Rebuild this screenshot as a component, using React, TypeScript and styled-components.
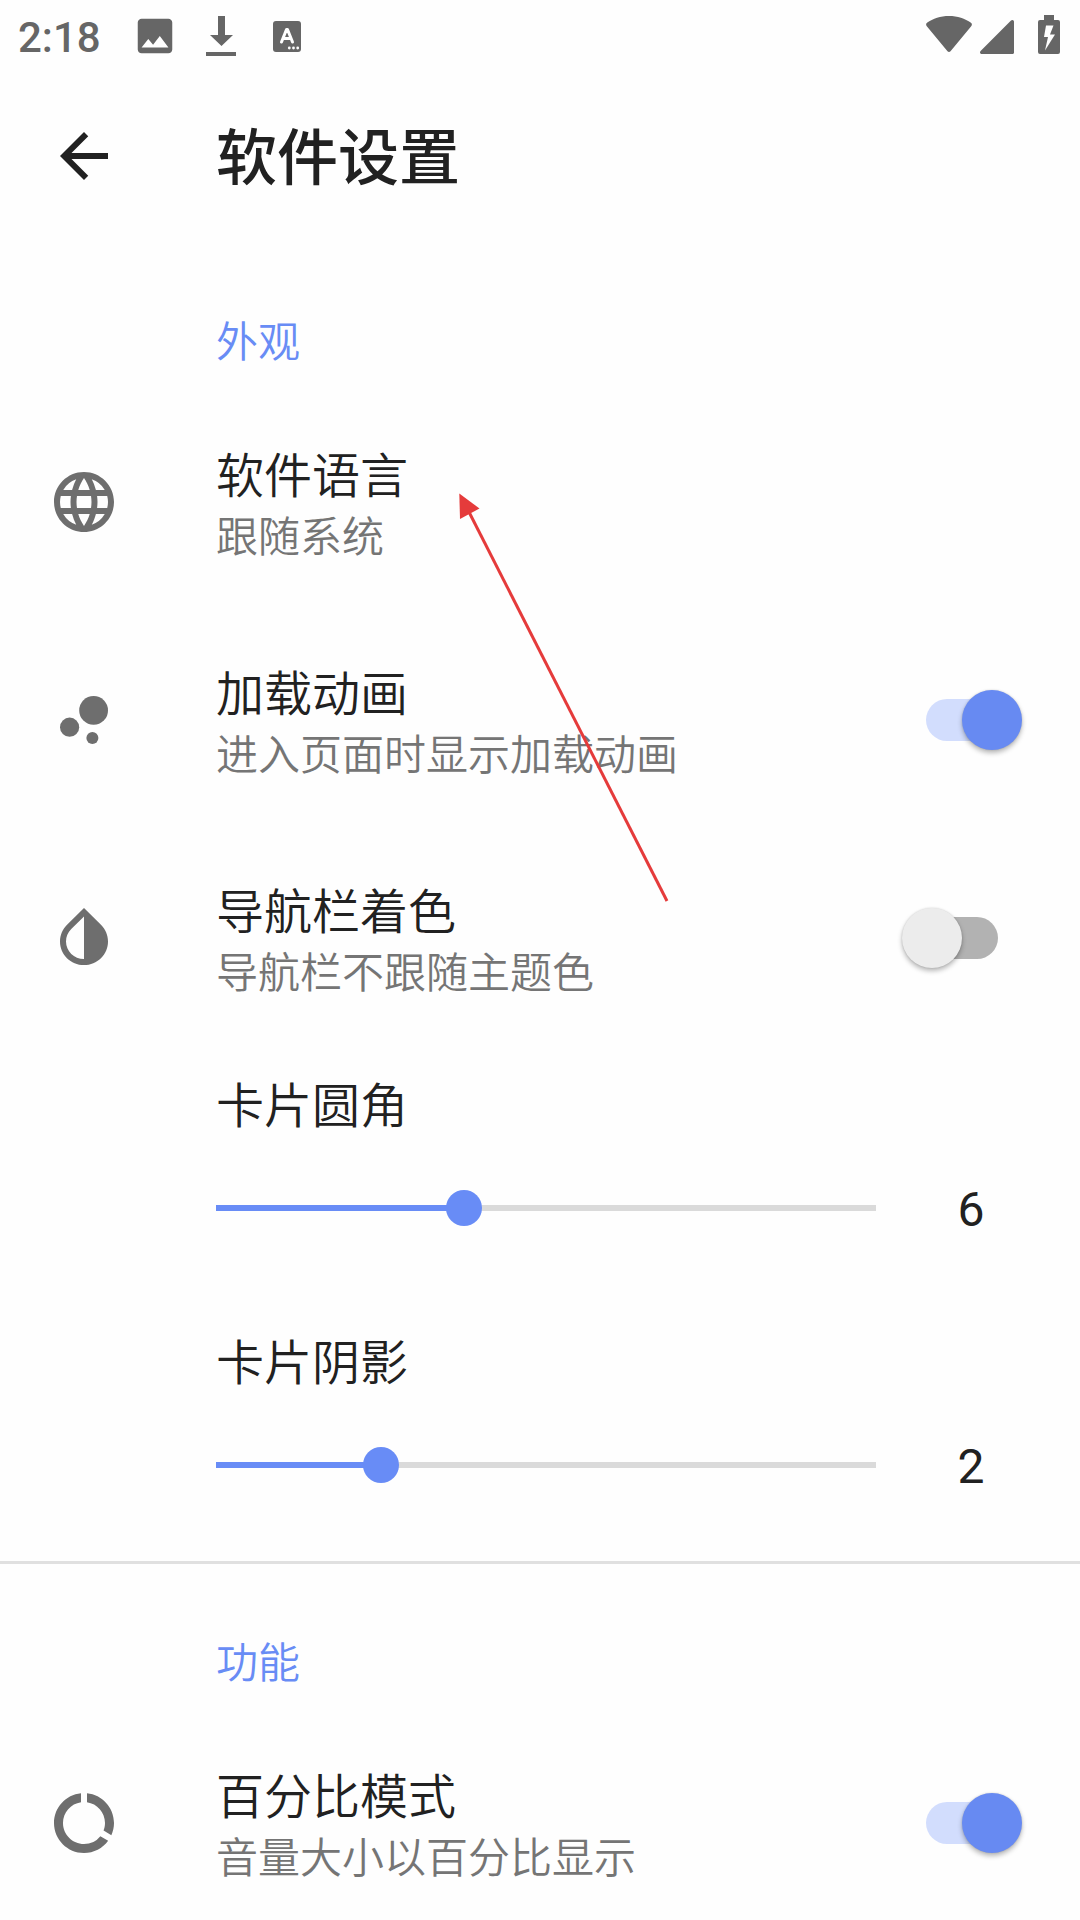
import React, { useId, useState } from 'react';
import styled, { createGlobalStyle } from 'styled-components';
import {
  MdArrowBack,
  MdBubbleChart,
  MdDataUsage,
  MdImage,
  MdInvertColors,
  MdLanguage,
} from 'react-icons/md';

const GlobalStyle = createGlobalStyle`
  *, *::before, *::after { box-sizing: border-box; }
  body {
    margin: 0;
    background: #fefefe;
    color: #212121;
    font-family: Roboto, "Noto Sans CJK SC", sans-serif;
    font-weight: 350;
  }
`;

const Screen = styled.div`
  display: flex;
  flex-direction: column;
  height: 100vh;
  overflow: hidden;
`;

const StatusBar = styled.div`
  flex: none;
  display: flex;
  justify-content: space-between;
  height: 72px;
  padding: 0 20px 0 18px;
  color: #666;

  svg { display: block; }
`;

const Notifications = styled.div`
  display: flex;
  align-items: center;
  gap: 28px;
`;

const SystemIcons = styled.div`
  display: flex;
  align-items: flex-end;
  gap: 8px;
  padding-bottom: 18px;
`;

const BatterySlot = styled.span`
  padding-left: 16px;
`;

const Clock = styled.time`
  margin-right: 3px;
  padding-top: 3px;
  font-size: 42px;
  font-weight: 500;
  line-height: 48px;
`;

const Toolbar = styled.header`
  flex: none;
  display: flex;
  align-items: center;
  height: 168px;
`;

const BackButton = styled.button`
  display: flex;
  align-items: center;
  justify-content: center;
  width: 168px;
  height: 168px;
  margin-right: 48px;
  padding: 0;
  border: 0;
  background: none;
  color: inherit;
`;

const PageTitle = styled.h1`
  margin: 0;
  padding-top: 6px;
  font-size: 61px;
  font-weight: 500;
  line-height: 72px;
`;

const Content = styled.main`
  position: relative;
  flex: 1;
  min-height: 0;
  overflow-y: auto;
  scrollbar-width: none;
`;

const Section = styled.section`
  padding-top: 48px;

  & + & {
    padding-top: 45px;
    border-top: 3px solid #e0e0e0;
  }
`;

const SectionTitle = styled.h2`
  margin: 0;
  padding: 5px 0 0 216px;
  color: #688cf5;
  font-size: 42px;
  font-weight: inherit;
  line-height: 100px;
`;

const Row = styled.div`
  display: flex;
  align-items: center;
  height: 218px;
  padding-right: 58px;
`;

const RowIcon = styled.span`
  flex: none;
  display: flex;
  justify-content: center;
  width: 168px;
  margin-right: 48px;
  color: #6e6e6e;
`;

const RowText = styled.label`
  flex: 1;
  display: flex;
  flex-direction: column;
  padding-top: 8px;
`;

const ItemTitle = styled.span`
  font-size: 48px;
  line-height: 64px;
`;

const ItemSummary = styled.span`
  color: #757575;
  font-size: 42px;
  line-height: 58px;
`;

const Switch = styled.input`
  appearance: none;
  flex: none;
  display: grid;
  align-items: center;
  width: 120px;
  height: 60px;
  margin: 0;

  &::before,
  &::after {
    content: "";
    grid-area: 1 / 1;
  }

  &::before {
    justify-self: center;
    width: 72px;
    height: 42px;
    border-radius: 21px;
    background: #b2b2b2;
  }

  &::after {
    justify-self: start;
    width: 60px;
    height: 60px;
    border-radius: 50%;
    background: #ececec;
    box-shadow: 0 3px 5px rgba(0, 0, 0, 0.28), 0 0 2px rgba(0, 0, 0, 0.14);
  }

  &:checked::before { background: #d2ddfd; }

  &:checked::after {
    justify-self: end;
    background: #678af2;
  }
`;

const SliderBlock = styled.div`
  display: flex;
  flex-direction: column;
  height: 257px;
  padding: 28px 32px 0 216px;
`;

const SliderLabel = styled.label`
  font-size: 48px;
  line-height: 64px;
`;

const SliderLine = styled.div`
  display: flex;
  align-items: center;
  height: 138px;
`;

const Range = styled.input`
  appearance: none;
  flex: 1;
  min-width: 0;
  height: 36px;
  margin: 0 0 0 -18px;
  background: none;

  &::-webkit-slider-runnable-track {
    height: 36px;
    background:
      linear-gradient(#688cf6, #688cf6) 18px 15px / calc((100% - 36px) * var(--fill)) 6px no-repeat,
      linear-gradient(#dadada, #dadada) 18px 15px / calc(100% - 36px) 6px no-repeat;
  }

  &::-webkit-slider-thumb {
    appearance: none;
    width: 36px;
    height: 36px;
    border-radius: 50%;
    background: #688cf6;
  }
`;

const SliderValue = styled.output`
  flex: none;
  width: 154px;
  padding-top: 3px;
  font-size: 48px;
  font-weight: 400;
  line-height: 56px;
  text-align: center;
`;

const Pointer = styled.svg`
  position: absolute;
  top: 250px;
  left: 450px;
  pointer-events: none;
`;

function DownloadIcon() {
  return (
    <svg width="30" height="40" viewBox="0 0 30 40" fill="currentColor" aria-hidden="true">
      <path d="M12 0h7v19h8L15.500 30 4 19h8zM0 36h30v4H0z" />
    </svg>
  );
}

function InputMethodIcon() {
  return (
    <svg width="46" height="31" viewBox="-9 0 46 31" aria-hidden="true">
      <rect width="28" height="31" rx="3" fill="currentColor" />
      <path
        d="M8.500 21 13.500 8.500h1L19.500 21M10.500 17.500h7"
        fill="none"
        stroke="#fefefe"
        strokeWidth="3"
        strokeLinecap="round"
        strokeLinejoin="round"
      />
      <g fill="#fefefe">
        <circle cx="16.300" cy="27" r="1.400" />
        <circle cx="20.500" cy="27" r="1.400" />
        <circle cx="24.700" cy="27" r="1.400" />
      </g>
    </svg>
  );
}

function WifiIcon() {
  return (
    <svg width="46" height="38" viewBox="0 0 46 38" fill="currentColor" aria-hidden="true">
      <path d="M1 10.500C-.2 9.300-.2 7.700 1 6.800 7 2.500 14.500 0 23 0s16 2.500 22 6.800c1.200.9 1.200 2.500 0 3.700L24.500 35.300c-.9 1-2.100 1-3 0z" />
    </svg>
  );
}

function SignalIcon() {
  return (
    <svg width="34" height="34" viewBox="0 0 34 34" fill="currentColor" aria-hidden="true">
      <path d="M31 .6c1.200-1.200 3-.5 3 1.200V32.500c0 .9-.6 1.500-1.500 1.500H1.800C.1 34-.6 32.300.6 31z" />
    </svg>
  );
}

function BatteryIcon() {
  return (
    <svg width="22" height="39" viewBox="0 0 22 39" fill="currentColor" fillRule="evenodd" aria-hidden="true">
      <path d="M6 0h10v5h4a2 2 0 0 1 2 2v30a2 2 0 0 1-2 2H2a2 2 0 0 1-2-2V7a2 2 0 0 1 2-2h4zM8 10.500 6 22h4L7 35.500 17 19.500h-5L15.500 10.500z" />
    </svg>
  );
}

interface SwitchRowProps {
  icon: React.ReactNode;
  title: string;
  summary: string;
  initial: boolean;
}

function SwitchRow({ icon, title, summary, initial }: SwitchRowProps) {
  const id = useId();
  const [on, setOn] = useState(initial);
  return (
    <Row>
      <RowIcon>{icon}</RowIcon>
      <RowText htmlFor={id}>
        <ItemTitle>{title}</ItemTitle>
        <ItemSummary>{summary}</ItemSummary>
      </RowText>
      <Switch id={id} type="checkbox" role="switch" checked={on} onChange={(e) => setOn(e.target.checked)} />
    </Row>
  );
}

interface SliderRowProps {
  title: string;
  max: number;
  initial: number;
}

function SliderRow({ title, max, initial }: SliderRowProps) {
  const id = useId();
  const [value, setValue] = useState(initial);
  const fill = { '--fill': value / max } as React.CSSProperties;
  return (
    <SliderBlock>
      <SliderLabel htmlFor={id}>{title}</SliderLabel>
      <SliderLine>
        <Range
          id={id}
          type="range"
          min={0}
          max={max}
          value={value}
          style={fill}
          onChange={(e) => setValue(Number(e.target.value))}
        />
        <SliderValue htmlFor={id}>{value}</SliderValue>
      </SliderLine>
    </SliderBlock>
  );
}

export default function App() {
  return (
    <Screen lang="zh-CN">
      <GlobalStyle />
      <StatusBar>
        <Notifications>
          <Clock>2:18</Clock>
          <MdImage size={46} />
          <DownloadIcon />
          <InputMethodIcon />
        </Notifications>
        <SystemIcons>
          <WifiIcon />
          <SignalIcon />
          <BatterySlot>
            <BatteryIcon />
          </BatterySlot>
        </SystemIcons>
      </StatusBar>
      <Toolbar>
        <BackButton type="button" aria-label="返回">
          <MdArrowBack size={72} />
        </BackButton>
        <PageTitle>软件设置</PageTitle>
      </Toolbar>
      <Content>
        <Section>
          <SectionTitle>外观</SectionTitle>
          <Row>
            <RowIcon>
              <MdLanguage size={72} />
            </RowIcon>
            <RowText as="div">
              <ItemTitle>软件语言</ItemTitle>
              <ItemSummary>跟随系统</ItemSummary>
            </RowText>
          </Row>
          <SwitchRow icon={<MdBubbleChart size={72} />} title="加载动画" summary="进入页面时显示加载动画" initial />
          <SwitchRow
            icon={<MdInvertColors size={72} />}
            title="导航栏着色"
            summary="导航栏不跟随主题色"
            initial={false}
          />
          <SliderRow title="卡片圆角" max={16} initial={6} />
          <SliderRow title="卡片阴影" max={8} initial={2} />
        </Section>
        <Section>
          <SectionTitle>功能</SectionTitle>
          <SwitchRow icon={<MdDataUsage size={72} />} title="百分比模式" summary="音量大小以百分比显示" initial />
        </Section>
        <Pointer width="220" height="414" viewBox="0 0 220 414" fill="#e53b3b" aria-hidden="true">
          <path d="M9.300 3.500 29.500 18.500 10 29z" />
          <path d="M19 22 217 411" stroke="#e53b3b" strokeWidth="3" />
        </Pointer>
      </Content>
    </Screen>
  );
}
